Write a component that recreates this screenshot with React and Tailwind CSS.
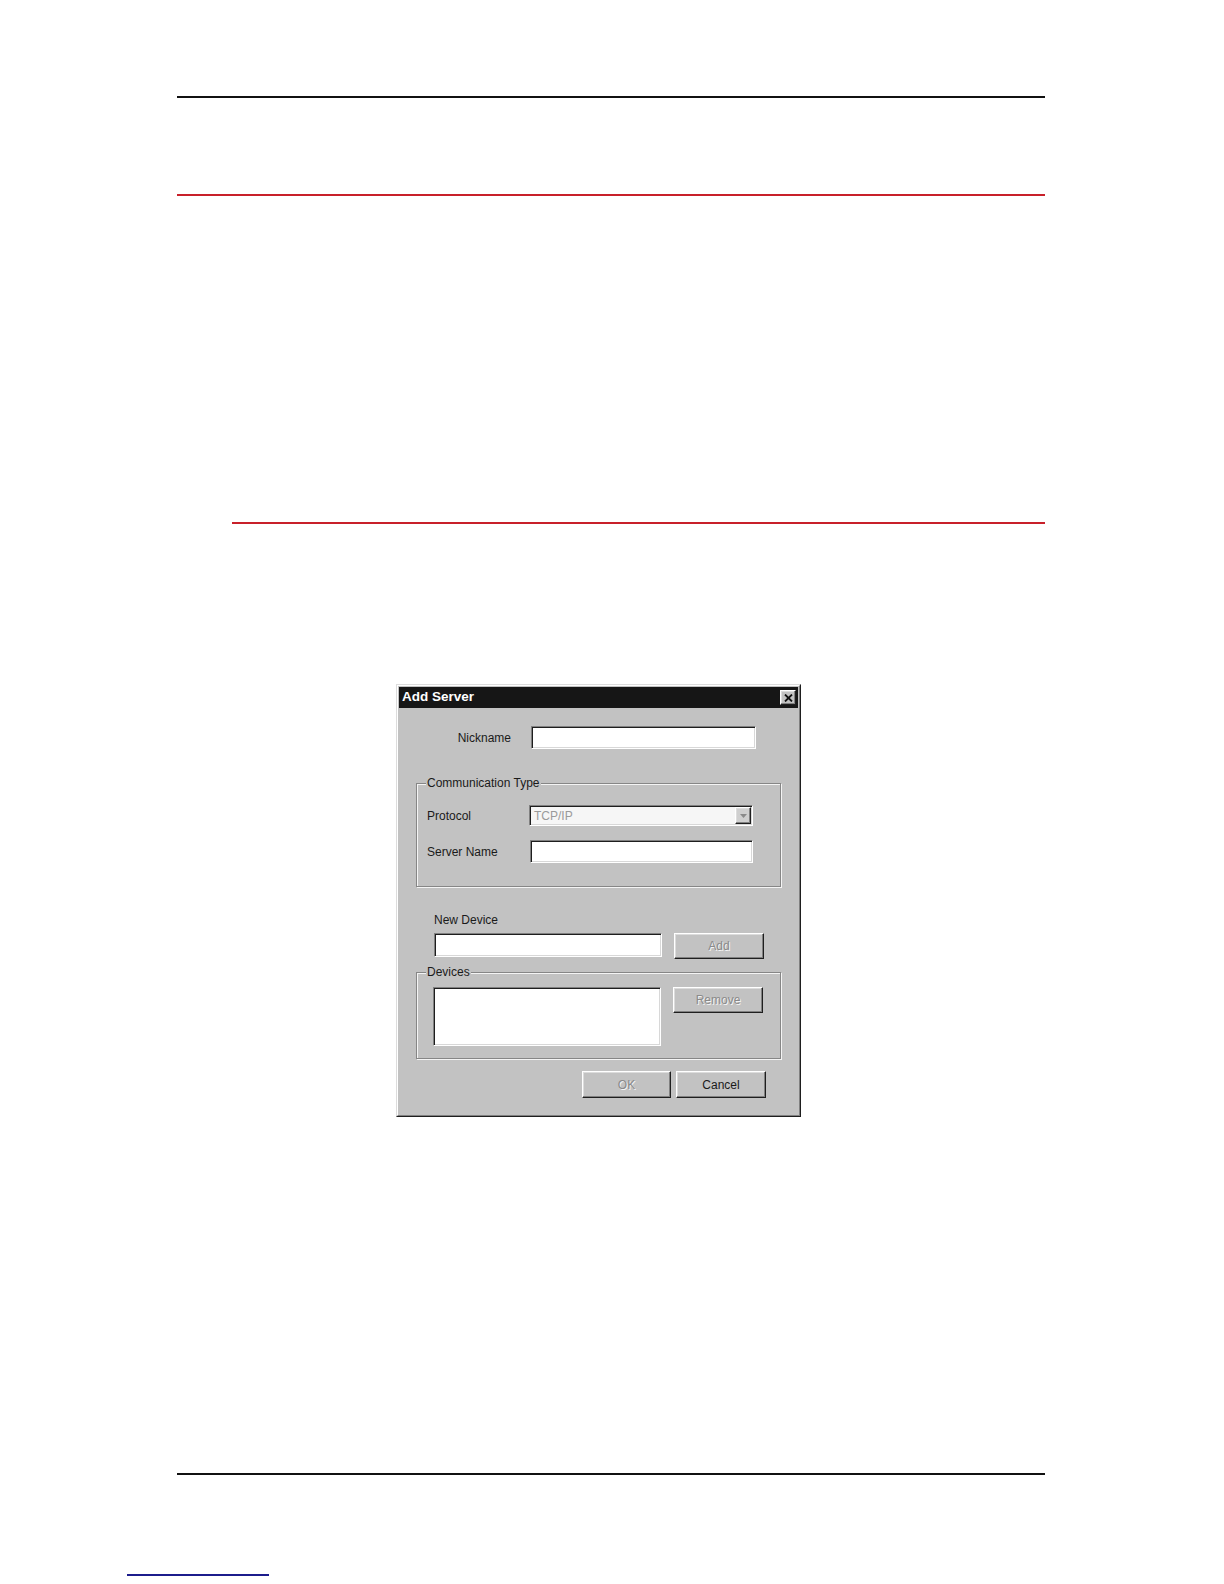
import React from "react";

const font = { fontFamily: '"Liberation Sans", Arial, sans-serif' };

const sunken =
  "border border-t-[#808080] border-l-[#808080] border-b-white border-r-white shadow-[inset_1px_1px_0_#1e1e1e,inset_-1px_-1px_0_#d8d8d8]";

const raised =
  "border border-t-white border-l-white border-b-[#1e1e1e] border-r-[#1e1e1e] shadow-[inset_-1px_-1px_0_#808080,inset_1px_1px_0_#dcdcdc] bg-[#c2c2c2]";

const etched =
  "border border-[#868686] shadow-[inset_1px_1px_0_#f4f4f4,1px_1px_0_#f4f4f4]";

const Button = ({ label, disabled, className = "" }) => (
  <div
    className={`${raised} ${className} flex items-center justify-center text-[12px] ${
      disabled
        ? "text-[#8a8a8a] [text-shadow:1px_1px_0_#f4f4f4]"
        : "text-[#1a1a1a]"
    }`}
  >
    {label}
  </div>
);

const Field = ({ className = "" }) => (
  <div className={`${sunken} bg-white ${className}`} />
);

const GroupBox = ({ title, className = "", children }) => (
  <div className={`relative ${etched} ${className}`}>
    <span className="absolute -top-[8px] left-[9px] bg-[#c2c2c2] px-[1px] text-[12px] leading-[15px] text-[#1a1a1a]">
      {title}
    </span>
    {children}
  </div>
);

const AddServerDialog = () => (
  <div className="ml-[396px] w-[405px] h-[433px] border border-t-[#dcdcdc] border-l-[#dcdcdc] border-b-[#1e1e1e] border-r-[#1e1e1e] bg-[#c2c2c2]">
    <div className="h-full border border-t-white border-l-white border-b-[#808080] border-r-[#808080] p-[1px]">
      {/* Title bar */}
      <div className="flex h-[21px] items-center justify-between bg-[#161616] pl-[3px] pr-[2px]">
        <span className="text-[13.5px] font-bold text-white">Add Server</span>
        <div
          className={`${raised} flex h-[15px] w-[16px] items-center justify-center`}
        >
          <svg width="9" height="8" viewBox="0 0 9 8">
            <path
              d="M1 0.5 L8 7.5 M8 0.5 L1 7.5"
              stroke="#111"
              strokeWidth="1.8"
            />
          </svg>
        </div>
      </div>

      {/* Nickname */}
      <div className="mt-[18px] flex items-center">
        <div className="w-[112px] text-right text-[12px] text-[#1a1a1a]">
          Nickname
        </div>
        <Field className="ml-[20px] h-[23px] w-[225px]" />
      </div>

      {/* Communication Type */}
      <GroupBox
        title="Communication Type"
        className="ml-[17px] mt-[34px] h-[104px] w-[365px]"
      >
        <div className="pl-[10px] pt-[21px]">
          <div className="flex items-center">
            <div className="w-[102px] text-[12px] text-[#1a1a1a]">Protocol</div>
            <div
              className={`${sunken} flex h-[21px] w-[224px] items-center justify-between bg-[#f6f6f6] pl-[4px] pr-[1px]`}
            >
              <span className="text-[12px] text-[#9a9a9a]">TCP/IP</span>
              <div
                className={`${raised} flex h-[17px] w-[16px] items-center justify-center bg-[#cfcfcf]`}
              >
                <svg width="7" height="4" viewBox="0 0 7 4">
                  <path d="M0 0 H7 L3.5 4 Z" fill="#8a8a8a" />
                </svg>
              </div>
            </div>
          </div>
          <div className="mt-[14px] flex items-center">
            <div className="w-[103px] text-[12px] text-[#1a1a1a]">
              Server Name
            </div>
            <Field className="h-[23px] w-[223px]" />
          </div>
        </div>
      </GroupBox>

      {/* New Device */}
      <div className="ml-[35px] mt-[26px] text-[12px] leading-[15px] text-[#1a1a1a]">
        New Device
      </div>
      <div className="ml-[35px] mt-[5px] flex items-start">
        <Field className="h-[24px] w-[228px]" />
        <Button label="Add" disabled className="ml-[12px] h-[26px] w-[90px]" />
      </div>

      {/* Devices */}
      <GroupBox
        title="Devices"
        className="ml-[17px] mt-[13px] h-[87px] w-[365px]"
      >
        <div className="flex items-start pl-[16px] pt-[14px]">
          <Field className="h-[59px] w-[228px]" />
          <Button
            label="Remove"
            disabled
            className="ml-[12px] h-[26px] w-[90px]"
          />
        </div>
      </GroupBox>

      {/* OK / Cancel */}
      <div className="ml-[183px] mt-[12px] flex">
        <Button label="OK" disabled className="h-[27px] w-[89px]" />
        <Button label="Cancel" className="ml-[5px] h-[27px] w-[90px]" />
      </div>
    </div>
  </div>
);

export default function App() {
  return (
    <div className="h-[1584px] w-[1224px] bg-white pt-[96px]" style={font}>
      <div className="ml-[177px] h-[2px] w-[868px] bg-[#111]" />
      <div className="ml-[177px] mt-[96px] h-[2px] w-[868px] bg-[#c8202a]" />
      <div className="ml-[232px] mt-[326px] h-[2px] w-[813px] bg-[#c8202a]" />

      <div className="mt-[160px]">
        <AddServerDialog />
      </div>

      <div className="ml-[177px] mt-[356px] h-[2px] w-[868px] bg-[#111]" />
      <div className="ml-[127px] mt-[99px] h-[2px] w-[142px] bg-[#1c1c8c]" />
    </div>
  );
}
